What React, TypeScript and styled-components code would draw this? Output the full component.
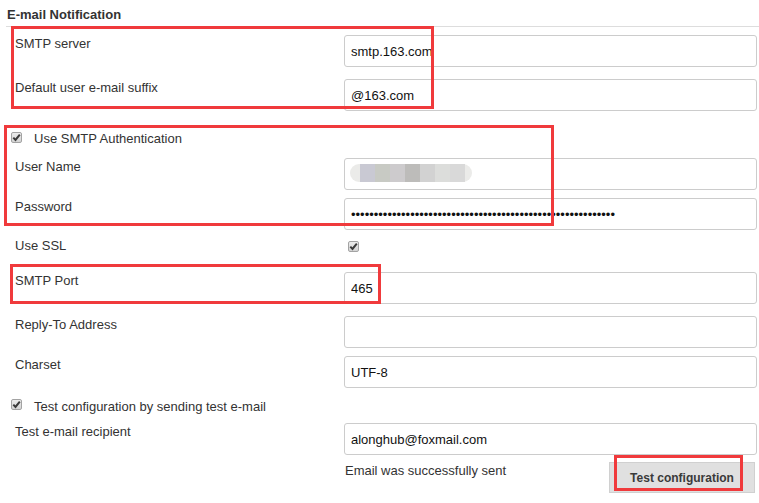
import React from "react";
import styled, { createGlobalStyle } from "styled-components";

const Global = createGlobalStyle`
  html, body { margin: 0; padding: 0; background: #fff; }
  body {
    font-family: "Liberation Sans", Arial, sans-serif;
    font-size: 13px;
    color: #333;
  }
`;

const Page = styled.div`
  position: relative;
  width: 759px;
  height: 503px;
  overflow: hidden;
  padding-top: 7px;
  box-sizing: border-box;
`;

const SectionTitle = styled.h3`
  margin: 0 0 0 6px;
  padding: 0 0 4px 1px;
  font-size: 13px;
  line-height: 15px;
  font-weight: bold;
  color: #333;
  border-bottom: 1px solid #ddd;
`;

const Form = styled.div`
  display: flex;
  flex-direction: column;
`;

const Row = styled.div<{ $gap: number; $h?: number }>`
  display: grid;
  grid-template-columns: 344px 413px;
  margin-top: ${(p) => p.$gap}px;
  height: ${(p) => p.$h ?? 32}px;
`;

const Label = styled.div`
  padding: 1px 0 0 15px;
  line-height: 15px;
  color: #333;
`;

const Field = styled.div`
  position: relative;
`;

const TextInput = styled.input`
  display: block;
  width: 413px;
  height: 32px;
  box-sizing: border-box;
  margin: 0;
  border: 1px solid #ccc;
  border-radius: 3px;
  padding: 0 6px;
  font-family: "Liberation Sans", Arial, sans-serif;
  font-size: 13px;
  color: #111;
  background: #fff;
  outline: none;
`;

const Blur = styled.div`
  position: absolute;
  left: 6px;
  top: 6px;
  width: 122px;
  height: 18px;
  border-radius: 9px;
  background: #ebebe9;
  display: flex;
  padding-left: 10px;
  box-sizing: border-box;
`;

const BlurBlock = styled.span<{ $c: string }>`
  width: 15px;
  height: 100%;
  background: ${(p) => p.$c};
`;

const CheckRow = styled.div<{ $gap: number }>`
  display: flex;
  align-items: flex-start;
  height: 20px;
  margin-top: ${(p) => p.$gap}px;
  padding-left: 11px;
`;

const CheckText = styled.span`
  margin-left: 12px;
  line-height: 20px;
  color: #333;
`;

const Box = styled.span<{ $top: number; $left?: number }>`
  display: inline-flex;
  align-items: center;
  justify-content: center;
  width: 11px;
  height: 11px;
  margin-top: ${(p) => p.$top}px;
  margin-left: ${(p) => p.$left ?? 0}px;
  box-sizing: border-box;
  border: 1px solid #a3a3a3;
  border-radius: 2px;
  background: linear-gradient(#ececec, #d4d4d4);
  flex-shrink: 0;
`;

const Cell = styled.div`
  display: flex;
  align-items: flex-start;
`;

const ActionCell = styled.div`
  display: flex;
  justify-content: space-between;
  align-items: flex-start;
`;

const Message = styled.span`
  padding: 1px 0 0 1px;
  line-height: 15px;
  color: #333;
`;

const Button = styled.button`
  width: 146px;
  height: 31px;
  margin: 0 2px 0 0;
  padding: 0;
  border: 1px solid #d0d0d0;
  background: #e0e0e0;
  font-family: "Liberation Sans", Arial, sans-serif;
  font-size: 12px;
  font-weight: bold;
  color: #3a3a3a;
`;

const Mark = styled.div<{ $x: number; $y: number; $w: number; $h: number }>`
  position: absolute;
  left: ${(p) => p.$x}px;
  top: ${(p) => p.$y}px;
  width: ${(p) => p.$w}px;
  height: ${(p) => p.$h}px;
  box-sizing: border-box;
  border: 3px solid #f03a3c;
  pointer-events: none;
`;

const Check = ({ top, left }: { top: number; left?: number }) => (
  <Box $top={top} $left={left} role="checkbox" aria-checked="true">
    <svg width="9" height="9" viewBox="0 0 9 9">
      <path d="M1.3 4.6 L3.5 6.9 L7.8 1.6" fill="none" stroke="#3a3a3a" strokeWidth="2" />
    </svg>
  </Box>
);

const blurColors = ["#c9c9d3", "#c8cac4", "#cdcbcd", "#bdbcba", "#d2d2d2", "#dcdddb", "#d9d9d9"];

export default function App() {
  return (
    <Page>
      <Global />
      <SectionTitle>E-mail Notification</SectionTitle>
      <Form>
        <Row $gap={8}>
          <Label>SMTP server</Label>
          <TextInput readOnly value="smtp.163.com" />
        </Row>
        <Row $gap={12}>
          <Label>Default user e-mail suffix</Label>
          <TextInput readOnly value="@163.com" />
        </Row>
        <CheckRow $gap={18}>
          <Check top={3} />
          <CheckText>Use SMTP Authentication</CheckText>
        </CheckRow>
        <Row $gap={9}>
          <Label>User Name</Label>
          <Field>
            <TextInput readOnly value="" />
            <Blur>
              {blurColors.map((c) => (
                <BlurBlock key={c} $c={c} />
              ))}
            </Blur>
          </Field>
        </Row>
        <Row $gap={8}>
          <Label>Password</Label>
          <TextInput type="password" readOnly value={"x".repeat(58)} />
        </Row>
        <Row $gap={7} $h={20}>
          <Label>Use SSL</Label>
          <Cell>
            <Check top={4} left={4} />
          </Cell>
        </Row>
        <Row $gap={15}>
          <Label>SMTP Port</Label>
          <TextInput readOnly value="465" />
        </Row>
        <Row $gap={12}>
          <Label>Reply-To Address</Label>
          <TextInput readOnly value="" />
        </Row>
        <Row $gap={8}>
          <Label>Charset</Label>
          <TextInput readOnly value="UTF-8" />
        </Row>
        <CheckRow $gap={9}>
          <Check top={2} />
          <CheckText>Test configuration by sending test e-mail</CheckText>
        </CheckRow>
        <Row $gap={6}>
          <Label>Test e-mail recipient</Label>
          <TextInput readOnly value="alonghub@foxmail.com" />
        </Row>
        <Row $gap={7} $h={31}>
          <div />
          <ActionCell>
            <Message>Email was successfully sent</Message>
            <Button type="button">Test configuration</Button>
          </ActionCell>
        </Row>
      </Form>
      <Mark $x={11} $y={26} $w={423} $h={83} />
      <Mark $x={4} $y={125} $w={550} $h={101} />
      <Mark $x={10} $y={264} $w={371} $h={40} />
      <Mark $x={614} $y={455} $w={129} $h={36} />
    </Page>
  );
}
